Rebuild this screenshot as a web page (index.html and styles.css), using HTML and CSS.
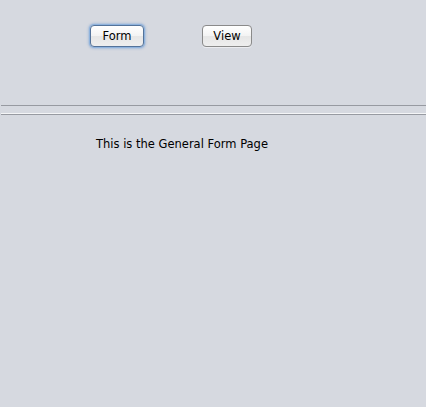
FILE: index.html
```html
<!DOCTYPE html>
<html>
<head>
<meta charset="utf-8">
<link rel="stylesheet" href="styles.css">
</head>
<body>
<div class="toolbar">
  <button class="btn btn-form focused">Form</button>
  <button class="btn btn-view">View</button>
</div>
<div class="sep sep-top"></div>
<div class="sep sep-bottom"></div>
<div class="content">
  <p class="label">This is the General Form Page</p>
</div>
</body>
</html>
```

FILE: styles.css
```css
html, body {
  margin: 0;
  padding: 0;
  background: #d6d9e0;
  width: 426px;
  height: 407px;
  overflow: hidden;
  font-family: "DejaVu Sans", sans-serif;
}
.toolbar {
  display: flex;
  align-items: flex-start;
  padding: 25px 0 0 90px;
  height: 80px;
}
.btn {
  font-family: "DejaVu Sans", sans-serif;
  font-size: 11.5px;
  color: #000;
  height: 22px;
  padding: 0;
  border: 1px solid #8a8a8a;
  border-radius: 4px;
  background: linear-gradient(#ffffff, #f3f3f3 50%, #e6e6e6 51%, #eeeeee);
  box-shadow: 0 1px 0 rgba(255,255,255,0.5);
}
.btn-form {
  width: 54px;
  margin-right: 58px;
}
.btn-view {
  width: 50px;
}
.focused {
  border-color: #54739a;
  box-shadow: 0 0 0 1px #8fb3dd, 0 0 2px 2px rgba(120,160,210,0.45);
}
.sep {
  margin-left: 1px;
  height: 1px;
  background: #979aa1;
}
.sep-bottom {
  margin-top: 7px;
  border-top: 1px solid #f4f5f7;
}
.content {
  padding: 22px 0 0 96px;
}
.label {
  margin: 0;
  font-size: 11.5px;
  line-height: 14px;
}
```
